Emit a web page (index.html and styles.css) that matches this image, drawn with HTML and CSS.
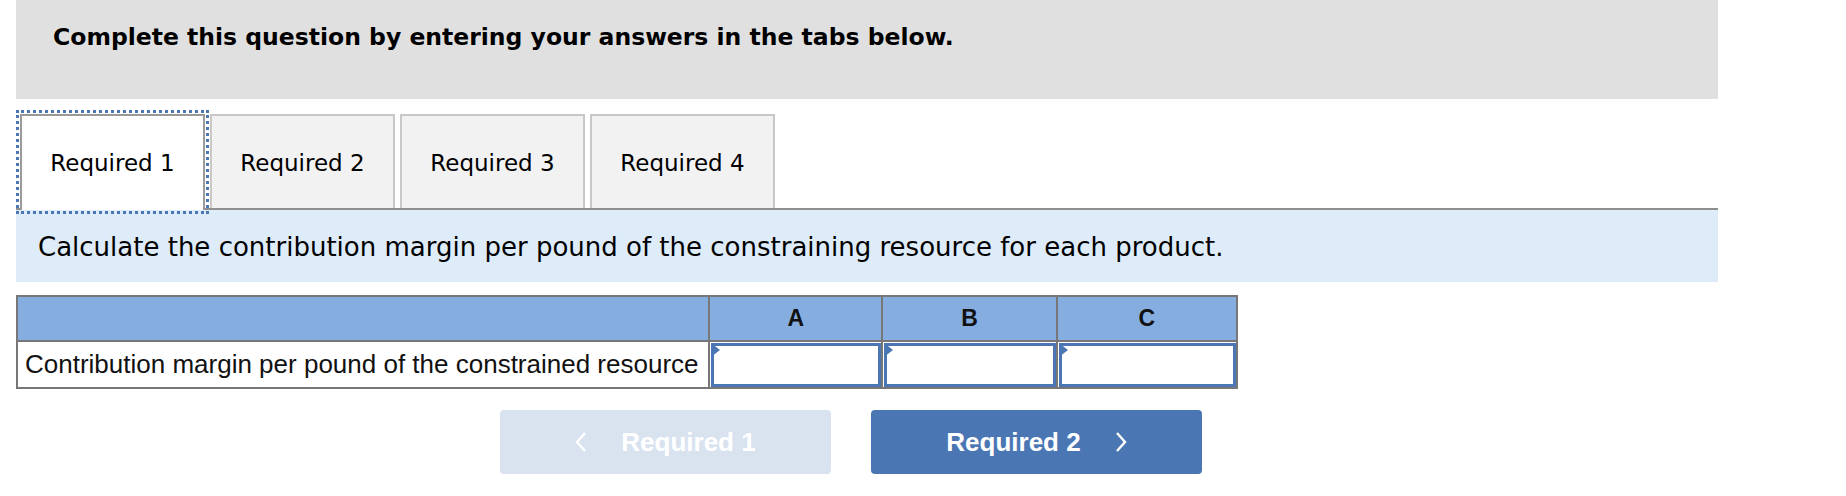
FILE: index.html
```html
<!DOCTYPE html>
<html>
<head>
<meta charset="utf-8">
<link rel="stylesheet" href="styles.css">
</head>
<body>
<div class="page">
  <div class="header">
    <h1 class="title">Complete this question by entering your answers in the tabs below.</h1>
  </div>
  <div class="tabs">
    <div class="tab active">Required 1</div>
    <div class="tab">Required 2</div>
    <div class="tab">Required 3</div>
    <div class="tab">Required 4</div>
  </div>
  <div class="instructions">Calculate the contribution margin per pound of the constraining resource for each product.</div>
  <table class="grid">
    <thead>
      <tr>
        <th class="label-col"></th>
        <th class="col-a">A</th>
        <th class="col-b">B</th>
        <th class="col-c">C</th>
      </tr>
    </thead>
    <tbody>
      <tr>
        <td class="label">Contribution margin per pound of the constrained resource</td>
        <td class="cell"><div class="input"><span class="flag"></span></div></td>
        <td class="cell"><div class="input"><span class="flag"></span></div></td>
        <td class="cell"><div class="input"><span class="flag"></span></div></td>
      </tr>
    </tbody>
  </table>
  <div class="nav">
    <button class="btn prev">
      <svg class="chev" width="12" height="22" viewBox="0 0 12 22"><polyline points="10,2 2,11 10,20" fill="none" stroke="#fff" stroke-width="2.4"/></svg>
      <span>Required 1</span>
    </button>
    <button class="btn next">
      <span>Required 2</span>
      <svg class="chev" width="12" height="22" viewBox="0 0 12 22"><polyline points="2,2 10,11 2,20" fill="none" stroke="#fff" stroke-width="2.4"/></svg>
    </button>
  </div>
</div>
</body>
</html>
```
FILE: styles.css
```css
html, body {
  margin: 0;
  padding: 0;
  background: #ffffff;
}
body {
  font-family: "DejaVu Sans", Verdana, sans-serif;
  color: #000;
}
.page {
  padding-left: 16px;
  width: 1702px;
}
.header {
  background: #e0e0e0;
  height: 99px;
  box-sizing: border-box;
  padding: 21px 0 0 37px;
}
.title {
  margin: 0;
  font-size: 23.5px;
  font-weight: bold;
  line-height: 32px;
}
.tabs {
  margin-top: 15px;
  padding-left: 4px;
  display: flex;
  align-items: flex-start;
  gap: 5px;
  border-bottom: 2px solid #8f8f8f;
  height: 94px;
}
.tab {
  width: 185px;
  height: 94px;
  box-sizing: border-box;
  border: 2px solid #c8c8c8;
  border-bottom: none;
  background: #f2f2f2;
  font-size: 23px;
  display: flex;
  align-items: center;
  justify-content: center;
  padding-top: 2px;
}
.tab.active {
  height: 96px;
  background: #ffffff;
  border-color: #9a9a9a;
  outline: 3px dotted #4a76b4;
  outline-offset: 1px;
  position: relative;
  z-index: 1;
  padding-top: 0;
}
.instructions {
  background: #deebf8;
  height: 72px;
  box-sizing: border-box;
  padding: 1px 0 0 22px;
  display: flex;
  align-items: center;
  font-size: 26px;
}
.grid {
  margin-top: 13px;
  border-collapse: collapse;
  width: 1222px;
  font-family: "Liberation Sans", Arial, sans-serif;
  border: 2px solid #777777;
}
.grid th {
  background: #85ade0;
  height: 43px;
  border: 2px solid #777777;
  font-size: 23px;
  font-weight: bold;
  color: #111;
  padding: 0;
}
.label-col { width: 689px; }
.col-a { width: 171px; }
.col-b { width: 172px; }
.col-c { width: 178px; }
.grid td {
  border: 2px solid #777777;
  padding: 0;
  height: 43px;
}
.label {
  font-size: 26px;
  padding: 0 0 0 7px !important;
  color: #111;
  white-space: nowrap;
}
.cell {
  padding: 1px 0 0 1px !important;
}
.input {
  height: 44px;
  box-sizing: border-box;
  border: 3px solid #4a76b4;
  background: #fff;
  position: relative;
}
.flag {
  position: absolute;
  left: -3px;
  top: -3px;
  width: 0;
  height: 0;
  border-top: 7px solid transparent;
  border-bottom: 7px solid transparent;
  border-left: 9px solid #4a76b4;
}
.nav {
  display: flex;
  gap: 40px;
  padding-left: 484px;
  margin-top: 21px;
}
.btn {
  width: 331px;
  height: 64px;
  border: none;
  border-radius: 4px;
  color: #ffffff;
  font-family: "Liberation Sans", Arial, sans-serif;
  font-weight: bold;
  font-size: 26px;
  display: flex;
  align-items: center;
  justify-content: center;
  gap: 34px;
  padding: 0;
}
.prev {
  background: #d9e3f0;
}
.next {
  background: #4a76b4;
}
.chev {
  display: block;
}
```
